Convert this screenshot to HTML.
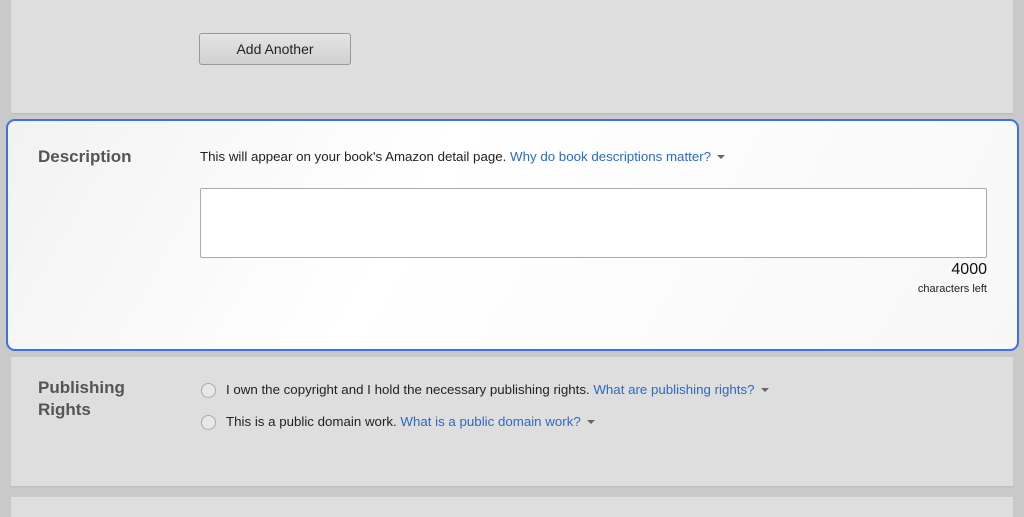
<!DOCTYPE html>
<html><head><style>
body{margin:0;width:1024px;height:505px;background:#c9c9c9;font-family:"Liberation Sans",sans-serif;position:relative;overflow:hidden}
.sec{position:absolute;left:11px;width:1002px;background:#dedede;box-shadow:0 1px 1px #bcbcbc}
.lbl{position:absolute;left:38px;font-weight:bold;font-size:17px;color:#555;line-height:22px}
a{color:#2a6bc2;text-decoration:none}
.car{display:inline-block;width:0;height:0;border-left:4px solid transparent;border-right:4px solid transparent;border-top:4px solid #666;vertical-align:middle;margin-left:6px}
.t{position:absolute;font-size:13.3px;color:#222}
.radio{position:absolute;left:201px;width:13px;height:13px;border:1px solid #aaa;border-radius:50%;background:#e8e8e8}
</style></head><body>
<div class="sec" style="top:0;height:113px">
 <div style="position:absolute;left:188px;top:33px;width:150px;height:30px;border:1px solid #999;border-radius:3px;background:linear-gradient(#e4e4e4,#d0d0d0);font-size:14px;color:#222;text-align:center;line-height:30px">Add Another</div>
</div>
<div style="position:absolute;left:6px;top:119px;width:1009px;height:228px;border:2px solid #3d72e6;border-radius:9px;background:linear-gradient(120deg,#f2f2f2,#fff 40%,#f7f7f7)">
 <div class="lbl" style="left:30px;top:25px">Description</div>
 <div class="t" style="left:192px;top:28px">This will appear on your book's Amazon detail page. <a>Why do book descriptions matter?</a><span class="car"></span></div>
 <div style="position:absolute;left:192px;top:67px;width:785px;height:68px;border:1px solid #aaa;border-radius:2px;background:#fff"></div>
 <div style="position:absolute;right:30px;top:140px;font-size:16px;color:#111">4000</div>
 <div style="position:absolute;right:30px;top:162px;font-size:11px;color:#222">characters left</div>
</div>
<div class="sec" style="top:357px;height:129px">
 <div class="lbl" style="left:27px;top:20px">Publishing<br>Rights</div>
</div>
<div class="radio" style="top:383px"></div>
<div class="t" style="left:226px;top:382px">I own the copyright and I hold the necessary publishing rights. <a>What are publishing rights?</a><span class="car"></span></div>
<div class="radio" style="top:415px"></div>
<div class="t" style="left:226px;top:414px">This is a public domain work. <a>What is a public domain work?</a><span class="car"></span></div>
<div class="sec" style="top:497px;height:20px"></div>
</body></html>
